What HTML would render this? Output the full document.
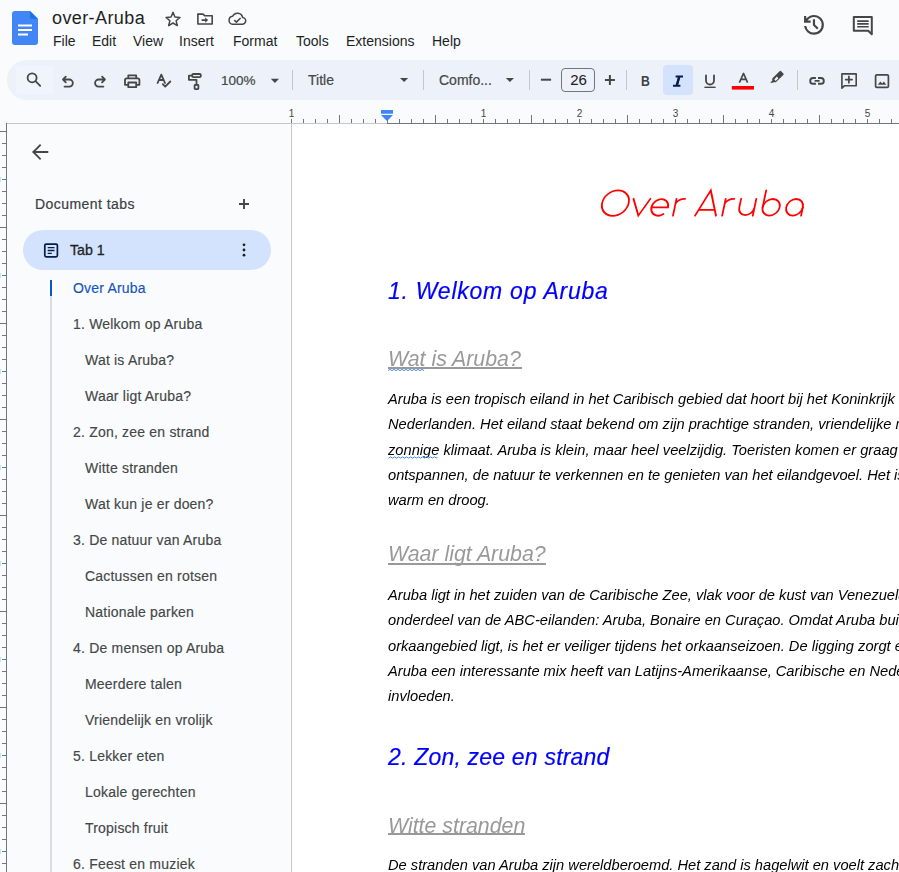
<!DOCTYPE html>
<html><head><meta charset="utf-8">
<style>
*{margin:0;padding:0;box-sizing:border-box}
html,body{width:899px;height:872px;overflow:hidden;background:#f9fbfd;font-family:"Liberation Sans",sans-serif;color:#1f1f1f;-webkit-font-smoothing:antialiased}
.p,.h1,.h2{will-change:transform}
.a{position:absolute;white-space:nowrap}
svg{position:absolute;overflow:visible}
.menu{font-size:14px;color:#1f1f1f;top:33px}
.side{font-size:14px;color:#444746;letter-spacing:0.2px;-webkit-text-stroke:0.15px #444746}
.p{font-style:italic;font-size:14.67px;color:#000;left:388px;line-height:25.27px}
.h1{font-style:italic;font-size:23px;letter-spacing:0.75px;color:#0000ff;left:388px;-webkit-text-stroke:0.2px #0000ff}
.h2{font-style:italic;font-size:21.33px;color:#999999;left:388px}
.ul{left:388px;height:2px;background:#999999}
</style></head><body>

<!-- Docs logo -->
<svg style="left:12px;top:11px" width="26" height="34" viewBox="0 0 26 34">
  <path d="M3 0H18L26 8V31A3 3 0 0 1 23 34H3A3 3 0 0 1 0 31V3A3 3 0 0 1 3 0Z" fill="#4285f4"/>
  <path d="M18 0L26 8H20A2 2 0 0 1 18 6Z" fill="#1a73e8"/>
  <rect x="6" y="13.5" width="14" height="2" fill="#fff"/>
  <rect x="6" y="18" width="14" height="2" fill="#fff"/>
  <rect x="6" y="22.5" width="10" height="2" fill="#fff"/>
</svg>

<div class="a" style="left:52px;top:8px;font-size:18px;letter-spacing:0.4px;color:#1f1f1f">over-Aruba</div>

<div class="a menu" style="left:53px">File</div>
<div class="a menu" style="left:92px">Edit</div>
<div class="a menu" style="left:133px">View</div>
<div class="a menu" style="left:179px">Insert</div>
<div class="a menu" style="left:233px">Format</div>
<div class="a menu" style="left:296px">Tools</div>
<div class="a menu" style="left:346px">Extensions</div>
<div class="a menu" style="left:432px">Help</div>

<!-- header icons -->
<svg style="left:0;top:0" width="899" height="60">
 <g fill="none" stroke="#444746" stroke-width="1.5" stroke-linejoin="round">
  <path d="M173.00 12.40 L174.94 17.03 L179.94 17.44 L176.14 20.72 L177.29 25.61 L173.00 23.00 L168.71 25.61 L169.86 20.72 L166.06 17.44 L171.06 17.03 Z" stroke-width="1.5"/>
  <path d="M197.9 14.2 H203 L204.6 15.8 H212.2 V24 H197.9 Z" stroke-width="1.6"/>
 </g>
 <path d="M197.2 13.4 H203.3 L204.9 15 H197.2 Z" fill="#444746"/>
 <path d="M201.6 19.3 H205.2 V17.4 L208.2 20.1 L205.2 22.8 V20.9 H201.6 Z" fill="#444746"/>
 <g fill="none" stroke="#444746" stroke-width="1.5" stroke-linejoin="round">
  <path d="M232.3 24.2 H242 A3.4 3.4 0 0 0 242.6 17.4 A5.3 5.3 0 0 0 232.6 16.3 A4 4 0 0 0 232.3 24.2 Z"/>
  <path d="M234.3 20.1 L236.4 22.1 L240.6 18"/>
 </g>
 <svg x="800.7" y="11.6" width="26.5" height="26.5" viewBox="0 -960 960 960"><path fill="#444746" d="M480-120q-138 0-240.5-91.5T122-440h82q14 104 92.5 172T480-200q117 0 198.5-81.5T760-480q0-117-81.5-198.5T480-760q-69 0-129 32t-101 88h110v80H120v-240h80v94q51-64 124.5-99T480-840q75 0 140.5 28.5t114 77q48.5 48.5 77 114T840-480q0 75-28.5 140.5t-77 114q-48.5 48.5-114 77T480-120Zm112-192L440-464v-216h80v184l128 128-56 56Z"/></svg>
 <path d="M853.8 17.1 H871.8 V34.3 L868.2 30.7 H853.8 Z" fill="none" stroke="#444746" stroke-width="2" stroke-linejoin="round"/>
 <path d="M857.2 21.1 H868.7 M857.2 23.9 H868.7 M857.2 26.8 H868.7" stroke="#444746" stroke-width="1.6"/>
</svg>


<!-- rulers -->
<div class="a" style="left:291px;top:124px;width:608px;height:748px;background:#fff"></div>
<svg style="left:0;top:0" width="899" height="872">
 <rect x="7" y="123" width="284" height="1" fill="#c4c7c5"/>
 <rect x="291" y="123" width="96" height="1" fill="#c4c7c5"/>
 <rect x="387" y="123" width="512" height="1" fill="#747775"/>
 <rect x="291" y="124" width="1" height="748" fill="#c4c7c5"/>
 <rect x="6" y="123" width="1" height="749" fill="#747775"/>
 <g fill="#747775"><rect x="291" y="119" width="1" height="4"/><rect x="303" y="119" width="1" height="4"/><rect x="315" y="119" width="1" height="4"/><rect x="327" y="119" width="1" height="4"/><rect x="339" y="115" width="1" height="8"/><rect x="351" y="119" width="1" height="4"/><rect x="363" y="119" width="1" height="4"/><rect x="375" y="119" width="1" height="4"/><rect x="387" y="119" width="1" height="4"/><rect x="399" y="119" width="1" height="4"/><rect x="411" y="119" width="1" height="4"/><rect x="423" y="119" width="1" height="4"/><rect x="435" y="115" width="1" height="8"/><rect x="447" y="119" width="1" height="4"/><rect x="459" y="119" width="1" height="4"/><rect x="471" y="119" width="1" height="4"/><rect x="483" y="119" width="1" height="4"/><rect x="495" y="119" width="1" height="4"/><rect x="507" y="119" width="1" height="4"/><rect x="519" y="119" width="1" height="4"/><rect x="531" y="115" width="1" height="8"/><rect x="543" y="119" width="1" height="4"/><rect x="555" y="119" width="1" height="4"/><rect x="567" y="119" width="1" height="4"/><rect x="579" y="119" width="1" height="4"/><rect x="591" y="119" width="1" height="4"/><rect x="603" y="119" width="1" height="4"/><rect x="615" y="119" width="1" height="4"/><rect x="627" y="115" width="1" height="8"/><rect x="639" y="119" width="1" height="4"/><rect x="651" y="119" width="1" height="4"/><rect x="663" y="119" width="1" height="4"/><rect x="675" y="119" width="1" height="4"/><rect x="687" y="119" width="1" height="4"/><rect x="699" y="119" width="1" height="4"/><rect x="711" y="119" width="1" height="4"/><rect x="723" y="115" width="1" height="8"/><rect x="735" y="119" width="1" height="4"/><rect x="747" y="119" width="1" height="4"/><rect x="759" y="119" width="1" height="4"/><rect x="771" y="119" width="1" height="4"/><rect x="783" y="119" width="1" height="4"/><rect x="795" y="119" width="1" height="4"/><rect x="807" y="119" width="1" height="4"/><rect x="819" y="115" width="1" height="8"/><rect x="831" y="119" width="1" height="4"/><rect x="843" y="119" width="1" height="4"/><rect x="855" y="119" width="1" height="4"/><rect x="867" y="119" width="1" height="4"/><rect x="879" y="119" width="1" height="4"/><rect x="891" y="119" width="1" height="4"/><rect x="0" y="131" width="6" height="1"/><rect x="2" y="143" width="4" height="1"/><rect x="2" y="155" width="4" height="1"/><rect x="2" y="167" width="4" height="1"/><rect x="2" y="179" width="4" height="1"/><rect x="0" y="177" width="1" height="5" fill="#b4eef6"/><rect x="2" y="191" width="4" height="1"/><rect x="2" y="203" width="4" height="1"/><rect x="2" y="215" width="4" height="1"/><rect x="0" y="227" width="6" height="1"/><rect x="2" y="239" width="4" height="1"/><rect x="2" y="251" width="4" height="1"/><rect x="2" y="263" width="4" height="1"/><rect x="2" y="275" width="4" height="1"/><rect x="0" y="273" width="1" height="5" fill="#b4eef6"/><rect x="2" y="287" width="4" height="1"/><rect x="2" y="299" width="4" height="1"/><rect x="2" y="311" width="4" height="1"/><rect x="0" y="323" width="6" height="1"/><rect x="2" y="335" width="4" height="1"/><rect x="2" y="347" width="4" height="1"/><rect x="2" y="359" width="4" height="1"/><rect x="2" y="371" width="4" height="1"/><rect x="0" y="369" width="1" height="5" fill="#b4eef6"/><rect x="2" y="383" width="4" height="1"/><rect x="2" y="395" width="4" height="1"/><rect x="2" y="407" width="4" height="1"/><rect x="0" y="419" width="6" height="1"/><rect x="2" y="431" width="4" height="1"/><rect x="2" y="443" width="4" height="1"/><rect x="2" y="455" width="4" height="1"/><rect x="2" y="467" width="4" height="1"/><rect x="0" y="465" width="1" height="5" fill="#b4eef6"/><rect x="2" y="479" width="4" height="1"/><rect x="2" y="491" width="4" height="1"/><rect x="2" y="503" width="4" height="1"/><rect x="0" y="515" width="6" height="1"/><rect x="2" y="527" width="4" height="1"/><rect x="2" y="539" width="4" height="1"/><rect x="2" y="551" width="4" height="1"/><rect x="2" y="563" width="4" height="1"/><rect x="0" y="561" width="1" height="5" fill="#b4eef6"/><rect x="2" y="575" width="4" height="1"/><rect x="2" y="587" width="4" height="1"/><rect x="2" y="599" width="4" height="1"/><rect x="0" y="611" width="6" height="1"/><rect x="2" y="623" width="4" height="1"/><rect x="2" y="635" width="4" height="1"/><rect x="2" y="647" width="4" height="1"/><rect x="2" y="659" width="4" height="1"/><rect x="0" y="657" width="1" height="5" fill="#b4eef6"/><rect x="2" y="671" width="4" height="1"/><rect x="2" y="683" width="4" height="1"/><rect x="2" y="695" width="4" height="1"/><rect x="0" y="707" width="6" height="1"/><rect x="2" y="719" width="4" height="1"/><rect x="2" y="731" width="4" height="1"/><rect x="2" y="743" width="4" height="1"/><rect x="2" y="755" width="4" height="1"/><rect x="0" y="753" width="1" height="5" fill="#b4eef6"/><rect x="2" y="767" width="4" height="1"/><rect x="2" y="779" width="4" height="1"/><rect x="2" y="791" width="4" height="1"/><rect x="0" y="803" width="6" height="1"/><rect x="2" y="815" width="4" height="1"/><rect x="2" y="827" width="4" height="1"/><rect x="2" y="839" width="4" height="1"/><rect x="2" y="851" width="4" height="1"/><rect x="0" y="849" width="1" height="5" fill="#b4eef6"/><rect x="2" y="863" width="4" height="1"/></g>
 <g font-family="Liberation Sans" font-size="10px" fill="#444746"><text x="291.5" y="116.8" text-anchor="middle">1</text><text x="483.5" y="116.8" text-anchor="middle">1</text><text x="579.5" y="116.8" text-anchor="middle">2</text><text x="675.5" y="116.8" text-anchor="middle">3</text><text x="771.5" y="116.8" text-anchor="middle">4</text><text x="867.5" y="116.8" text-anchor="middle">5</text></g>
 <path d="M381 110 H393 V113.8 H381 Z M381 115.1 H393 L387 121 Z" fill="#4285f4"/>
</svg>

<!-- toolbar -->
<div class="a" style="left:7px;top:60px;width:1000px;height:40px;background:#edf2fa;border-radius:20px"></div>
<div class="a" style="left:663px;top:65px;width:30px;height:30px;background:#d3e3fd;border-radius:4px"></div>
<div class="a" style="left:16px;top:66px;width:37px;height:27.5px;background:#f0f4fb;border-radius:2px"></div>
<div class="a" style="left:561px;top:68px;width:33.5px;height:23.5px;border:1px solid #747775;border-radius:4px"></div>

<div class="a" style="left:221px;top:73px;font-size:13.5px;color:#444746;-webkit-text-stroke:0.2px #444746">100%</div>
<div class="a" style="left:308px;top:72px;font-size:14px;color:#444746;-webkit-text-stroke:0.2px #444746">Title</div>
<div class="a" style="left:439px;top:72px;font-size:14px;color:#444746;-webkit-text-stroke:0.2px #444746">Comfo...</div>
<div class="a" style="left:570.2px;top:71.1px;font-size:15px;color:#1f1f1f;-webkit-text-stroke:0.1px #1f1f1f">26</div>
<div class="a" style="left:640.6px;top:72.6px;font-size:14.2px;font-weight:bold;color:#3c4043;transform:scaleX(0.86);transform-origin:0 0">B</div>

<svg style="left:0;top:0" width="899" height="124">
 <g fill="none" stroke="#444746" stroke-width="1.8" stroke-linecap="round" stroke-linejoin="round">
  <!-- search -->
  <circle cx="32.1" cy="77.8" r="4.5"/>
  <path d="M35.5 81.2 L40.2 85.9"/>
  <!-- undo -->
  <path d="M63 79.5 H69.3 A3.55 3.55 0 0 1 69.3 86.6 H64.5 M65.8 76.7 L63 79.5 L65.8 82.3"/>
  <!-- redo -->
  <path d="M104.9 79.5 H98.6 A3.55 3.55 0 0 0 98.6 86.6 H103.4 M102.1 76.7 L104.9 79.5 L102.1 82.3"/>
  <!-- print -->
  <path d="M128.3 78 V75.3 H136.2 V78"/>
  <path d="M127.6 84.8 H125 V80.1 A1.8 1.8 0 0 1 126.8 78.3 H137.6 A1.8 1.8 0 0 1 139.4 80.1 V84.8 H136.8"/>
  <rect x="128.3" y="82.5" width="7.9" height="4.7"/>
  <!-- spell -->
  <path d="M157.6 83 L161.3 74.6 L165 83 M159.1 80 H163.6"/>
  <path d="M162.8 84.2 L165.2 86.6 L170.3 81.5"/>
  <!-- paint format -->
  <rect x="192.1" y="74" width="8.8" height="3.2" rx="1.4"/>
  <path d="M192.1 75.6 H188.9 V79.8 H196.5 V84.5"/>
  <rect x="194.6" y="84.9" width="3.8" height="4.2" rx="0.5"/>
  <!-- minus, plus -->
  <path d="M540.9 79.7 H551.1" stroke-width="2" stroke-linecap="butt"/>
  <path d="M604.9 80 H614.9 M609.9 75 V85" stroke-width="2" stroke-linecap="butt"/>
  <!-- U -->
  <path d="M706 75.3 V80.5 A4 4 0 0 0 714 80.5 V75.3"/>
  <path d="M704.4 87.3 H715.6" stroke-width="1.4" stroke-linecap="butt"/>
  <!-- A -->
  <path d="M739.4 82.6 L743.5 73.4 L747.6 82.6 M740.8 79.4 H746.2" stroke-width="1.6" stroke-linecap="butt"/>
  <!-- link -->
  <path d="M815.9 78 H813.1 A2.9 2.9 0 0 0 813.1 83.8 H815.9 M818 78 H820.9 A2.9 2.9 0 0 1 820.9 83.8 H818 M814.6 80.9 H819.6" stroke-width="1.9" stroke-linecap="butt"/>
  <!-- add comment -->
  <path d="M841.9 73.9 H856.2 V85.7 H844.6 L841.9 88.2 Z" stroke-width="1.6"/>
  <path d="M848.9 76.4 V82.8 M845.7 79.6 H852.1" stroke-width="1.7"/>
  <!-- image -->
  <rect x="875.6" y="74.8" width="12.8" height="12.6" rx="1.2" stroke-width="1.7"/>
 </g>
 <path d="M877.8 84.8 L880.4 81.6 L882.2 83.4 L883.8 81.4 L886.3 84.8 Z" fill="#444746"/>
 <!-- dropdown triangles -->
 <path d="M270.8 78.8 H279 L274.9 82.9 Z" fill="#444746"/>
 <path d="M400 78 H408.2 L404.1 82.1 Z" fill="#444746"/>
 <path d="M505.8 78 H514 L509.9 82.1 Z" fill="#444746"/>
 <!-- italic I -->
 <path d="M675.6 76.5 H683 M673 85.8 H680.4 M679.3 76.5 L676.7 85.8" stroke="#041e49" stroke-width="1.9" fill="none"/><path d="M679.3 76.5 L676.7 85.8" stroke="#041e49" stroke-width="2.4"/>
 <!-- red bar -->
 <rect x="731.8" y="86" width="22.2" height="3.6" fill="#ff0000"/>
 <!-- pencil -->
 <path d="M770.1 82.7 L772.4 80.4 L772.2 79.5 Q772 78.6 772.7 77.9 L779.6 71.2 Q780.4 70.5 781.2 71.2 L783.4 73.4 Q784.1 74.2 783.3 75 L776.4 81.7 Q775.7 82.4 774.8 82.2 L773.9 82 L773.2 82.7 Z" fill="#444746"/>
 <path d="M774.3 79.5 L776.8 76.6 L778.4 78.2 L775.7 81.1 Z" fill="#edf2fa"/>
 <!-- separators -->
 <g fill="#c7c7c7">
  <rect x="292" y="70" width="1" height="20"/>
  <rect x="423" y="70" width="1" height="20"/>
  <rect x="529" y="70" width="1" height="20"/>
  <rect x="626" y="70" width="1" height="20"/>
  <rect x="797" y="70" width="1" height="20"/>
 </g>
</svg>

<!-- sidebar -->
<svg style="left:0;top:0" width="300" height="872">
 <path d="M47.4 152 H33.5 M40 145.3 L33.3 152 L40 158.7" fill="none" stroke="#444746" stroke-width="1.8" stroke-linecap="square"/>
 <path d="M244 199 V209 M239 204 H249" stroke="#444746" stroke-width="1.9"/>
 <rect x="23" y="230" width="248" height="40" rx="20" fill="#d3e3fd"/>
 <rect x="44.8" y="244.2" width="12.6" height="12.6" rx="1.3" fill="none" stroke="#041e49" stroke-width="1.7"/>
 <path d="M47.7 247.6 H54.5 M47.7 250.5 H54.5 M47.7 253.4 H51.8" stroke="#041e49" stroke-width="1.4"/>
 <circle cx="244" cy="244.8" r="1.4" fill="#1f1f1f"/>
 <circle cx="244" cy="250" r="1.4" fill="#1f1f1f"/>
 <circle cx="244" cy="255.2" r="1.4" fill="#1f1f1f"/>
 <rect x="50" y="280" width="2" height="592" fill="#dadce0"/>
 <rect x="50" y="280" width="2" height="16" fill="#0b57d0"/>
</svg>
<div class="a" style="left:35px;top:196px;font-size:14px;letter-spacing:0.45px;color:#3c4043;-webkit-text-stroke:0.2px #3c4043">Document tabs</div>
<div class="a" style="left:70px;top:242.3px;font-size:14.2px;color:#1f1f1f;-webkit-text-stroke:0.3px #1f1f1f">Tab 1</div>
<div class="a side" style="left:73px;top:280.33px;color:#0b57d0">Over Aruba</div><div class="a side" style="left:73px;top:316.33px;color:#444746">1. Welkom op Aruba</div><div class="a side" style="left:85px;top:352.33px;color:#444746">Wat is Aruba?</div><div class="a side" style="left:85px;top:388.33px;color:#444746">Waar ligt Aruba?</div><div class="a side" style="left:73px;top:424.33px;color:#444746">2. Zon, zee en strand</div><div class="a side" style="left:85px;top:460.33px;color:#444746">Witte stranden</div><div class="a side" style="left:85px;top:496.33px;color:#444746">Wat kun je er doen?</div><div class="a side" style="left:73px;top:532.33px;color:#444746">3. De natuur van Aruba</div><div class="a side" style="left:85px;top:568.33px;color:#444746">Cactussen en rotsen</div><div class="a side" style="left:85px;top:604.33px;color:#444746">Nationale parken</div><div class="a side" style="left:73px;top:640.33px;color:#444746">4. De mensen op Aruba</div><div class="a side" style="left:85px;top:676.33px;color:#444746">Meerdere talen</div><div class="a side" style="left:85px;top:712.33px;color:#444746">Vriendelijk en vrolijk</div><div class="a side" style="left:73px;top:748.33px;color:#444746">5. Lekker eten</div><div class="a side" style="left:85px;top:784.33px;color:#444746">Lokale gerechten</div><div class="a side" style="left:85px;top:820.33px;color:#444746">Tropisch fruit</div><div class="a side" style="left:73px;top:856.33px;color:#444746">6. Feest en muziek</div>

<!-- document -->
<svg style="left:0;top:0" width="899" height="872"><g fill="none" stroke="#ff0000" stroke-width="1.8" stroke-linecap="round" transform="translate(0 216.5) skewX(-11.860) translate(0 -216.5)"><ellipse cx="612.6" cy="203.1" rx="13.3" ry="12.7"/><path d="M629.8 198.8 L638.2 215.6 L646.6 198.8"/><path d="M649.5 207.4 H666.0999999999999 A8.3 8.3 0 1 0 662.91 213.94"/><path d="M672.8 215.7 V198.8 M672.8 204 Q674.2 198.8 681.4 198.8"/><path d="M694.9 215.7 L705.3 190.4 L715.8 215.7 M697.3 209.9 H713.2"/><path d="M722 215.7 V198.8 M722 204 Q723.4 198.8 730.6 198.8"/><path d="M737.4 198.8 V207.5 A7.6 7.6 0 0 0 752.6 207.5 V198.8 M752.6 207.5 V215.7"/><path d="M760.7 190.3 V207.3"/><ellipse cx="769.2" cy="207.3" rx="8.5" ry="8.3"/><circle cx="792.6" cy="207.3" r="8.3"/><path d="M800.9 207.3 V215.7"/></g></svg>
<div class="a h1" style="top:278px">1. Welkom op Aruba</div>
<div class="a h2" style="top:346.6px">Wat is Aruba?</div>
<div class="a ul" style="top:367px;width:134px"></div>
<div class="a p" style="top:387.28px">Aruba is een tropisch eiland in het Caribisch gebied dat hoort bij het Koninkrijk<br>Nederlanden. Het eiland staat bekend om zijn prachtige stranden, vriendelijke mensen en<br>zonnige klimaat. Aruba is klein, maar heel veelzijdig. Toeristen komen er graag om te<br>ontspannen, de natuur te verkennen en te genieten van het eilandgevoel. Het is er vaak<br>warm en droog.</div>
<div class="a h2" style="top:542.4px">Waar ligt Aruba?</div>
<div class="a ul" style="top:563px;width:158px"></div>
<div class="a p" style="top:582.68px">Aruba ligt in het zuiden van de Caribische Zee, vlak voor de kust van Venezuela. Het is<br>onderdeel van de ABC-eilanden: Aruba, Bonaire en Curaçao. Omdat Aruba buiten het<br>orkaangebied ligt, is het er veiliger tijdens het orkaanseizoen. De ligging zorgt er ook voor dat<br>Aruba een interessante mix heeft van Latijns-Amerikaanse, Caribische en Nederlandse<br>invloeden.</div>
<div class="a h1" style="top:744px;letter-spacing:0.2px">2. Zon, zee en strand</div>
<div class="a h2" style="top:813.6px">Witte stranden</div>
<div class="a ul" style="top:833px;width:137px"></div>
<div class="a p" style="top:853.28px">De stranden van Aruba zijn wereldberoemd. Het zand is hagelwit en voelt zacht aan</div>
<svg style="left:0;top:0" width="899" height="872"><g fill="none" stroke="#4c8bf5" stroke-width="1"><path d="M388 370.6 L390 369.4 L392 370.6 L394 369.4 L396 370.6 L398 369.4 L400 370.6 L402 369.4 L404 370.6 L406 369.4 L408 370.6 L410 369.4 L412 370.6 L414 369.4 L416 370.6 L418 369.4 L420 370.6 L422 369.4 L424 370.6"/><path d="M388.5 458.1 L390.5 456.9 L392.5 458.1 L394.5 456.9 L396.5 458.1 L398.5 456.9 L400.5 458.1 L402.5 456.9 L404.5 458.1 L406.5 456.9 L408.5 458.1 L410.5 456.9 L412.5 458.1 L414.5 456.9 L416.5 458.1 L418.5 456.9 L420.5 458.1 L422.5 456.9 L424.5 458.1 L426.5 456.9 L428.5 458.1 L430.5 456.9 L432.5 458.1 L434.5 456.9 L436.5 458.1 L437.5 456.9"/></g></svg>

</body></html>
